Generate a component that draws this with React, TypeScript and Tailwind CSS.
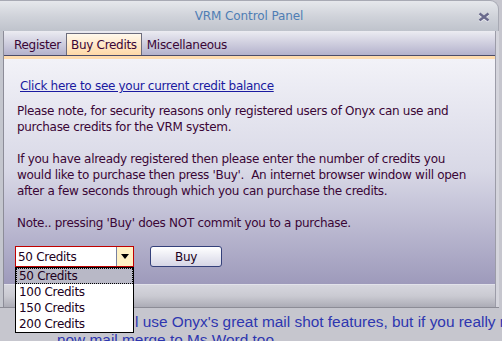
import React from "react";

const dlg = { fontFamily: '"DejaVu Sans", Verdana, sans-serif' } as React.CSSProperties;

export default function App() {
  return (
    <div className="relative w-[502px] h-[341px] overflow-hidden bg-[#c6c6ce]" style={dlg}>
      <div className="w-[499px] flex flex-col">
        {/* title bar */}
        <div className="h-[31px] rounded-tr-[9px] border-t border-r border-[#a8aab4] bg-gradient-to-b from-[#e6e8ec] via-[#d0d3da] to-[#bfc3cc] flex items-center relative">
          <div className="flex-1 text-center text-[12px] text-[#4f7db4] tracking-[-0.1px]">VRM Control Panel</div>
          <div className="absolute right-[8px] top-[11px]">
            <svg width="12" height="10" viewBox="0 0 12 10">
              <path d="M1.5 1.5 L10.5 8.5 M10.5 1.5 L1.5 8.5" stroke="#f4f4f8" strokeWidth="2.6" transform="translate(0,0.8)" />
              <path d="M1.5 1.5 L10.5 8.5 M10.5 1.5 L1.5 8.5" stroke="#6a6a8c" strokeWidth="2.4" />
            </svg>
          </div>
        </div>
        {/* body */}
        <div className="flex flex-col border-l-[3px] border-l-[#c4c6ce] border-r-[3px] border-r-[#d4d4dc]">
          <div className="border-l border-l-[#8c8c98] border-r border-r-[#9c9ca8] flex flex-col">
            {/* tab strip */}
            <div className="h-[24px] bg-gradient-to-b from-[#ececf2] to-[#b4b2cc] flex items-end pl-[6px] text-[12px] text-[#3a0636] tracking-[-0.3px]">
              <div className="h-[21px] pl-[4px] pr-[5px] flex items-center">Register</div>
              <div className="h-[22px] px-[4px] flex items-center border border-b-0 border-[#6c6c7c] bg-gradient-to-b from-[#fff8ec] to-[#ffd9a6]">Buy Credits</div>
              <div className="h-[21px] px-[5px] flex items-center">Miscellaneous</div>
            </div>
            <div className="h-[1px] bg-[#4c4c68]" />
            <div className="h-[3px] bg-[#ffdcae]" />
            {/* content */}
            <div className="h-[225px] bg-gradient-to-b from-[#f2f2f8] via-[#d8d8e6] to-[#9e9abb] flex flex-col pl-[13px] text-[12px] leading-[16px] text-[#3a0636] tracking-[-0.3px]">
              <div className="pt-[19px] pl-[3px]">
                <span className="text-[#1a1aa0] underline">Click here to see your current credit balance</span>
              </div>
              <div className="mt-[9px]">
                Please note, for security reasons only registered users of Onyx can use and<br />
                purchase credits for the VRM system.
              </div>
              <div className="mt-[16px]">
                If you have already registered then please enter the number of credits you<br />
                would like to purchase then press 'Buy'.&nbsp; An internet browser window will open<br />
                after a few seconds through which you can purchase the credits.
              </div>
              <div className="mt-[16px]">Note.. pressing 'Buy' does NOT commit you to a purchase.</div>
              <div className="mt-[15px] flex items-start -ml-[2px]">
                <div className="relative">
                  <div className="w-[119px] h-[21px] border border-[#c00000] bg-white flex">
                    <div className="flex-1 pl-[2px] flex items-center text-[#200020]">50 Credits</div>
                    <div className="w-[17px] border-l border-[#7880a0] bg-[#fff2c4] flex items-center justify-center">
                      <svg width="8" height="5" viewBox="0 0 8 5"><path d="M0 0 L8 0 L4 5 Z" fill="#000" /></svg>
                    </div>
                  </div>
                  <div className="absolute left-0 top-[21px] w-[119px] border border-black bg-white text-[#200020] z-10 flex flex-col">
                    <div className="h-[16px] bg-[#b8b8c6] border border-dotted border-black pl-[2px] flex items-center">50 Credits</div>
                    <div className="h-[16px] pl-[3px] flex items-center">100 Credits</div>
                    <div className="h-[16px] pl-[3px] flex items-center">150 Credits</div>
                    <div className="h-[16px] pl-[3px] flex items-center">200 Credits</div>
                  </div>
                </div>
                <div className="ml-[16px] w-[72px] h-[21px] rounded-[3px] border border-[#34407a] bg-gradient-to-b from-white to-[#d6d6e6] flex items-center justify-center text-[#200020]">Buy</div>
              </div>
            </div>
            {/* bottom bar */}
            <div className="h-[23px] border-t border-t-[#e2e2ea] bg-gradient-to-b from-[#d6d6de] via-[#cacad2] to-[#acacb6]" />
          </div>
        </div>
        <div className="h-[1px] bg-[#8c8c96]" />
      </div>
      {/* background page text */}
      <div className="text-[15.4px] leading-[18px] text-[#2e36b0] whitespace-nowrap mt-[5px]" style={{ fontFamily: '"Liberation Sans", Arial, sans-serif' }}>
        <div className="pl-[135px]">l use Onyx's great mail shot features, but if you really need to</div>
        <div className="pl-[57px]">now mail merge to Ms Word too</div>
      </div>
    </div>
  );
}
